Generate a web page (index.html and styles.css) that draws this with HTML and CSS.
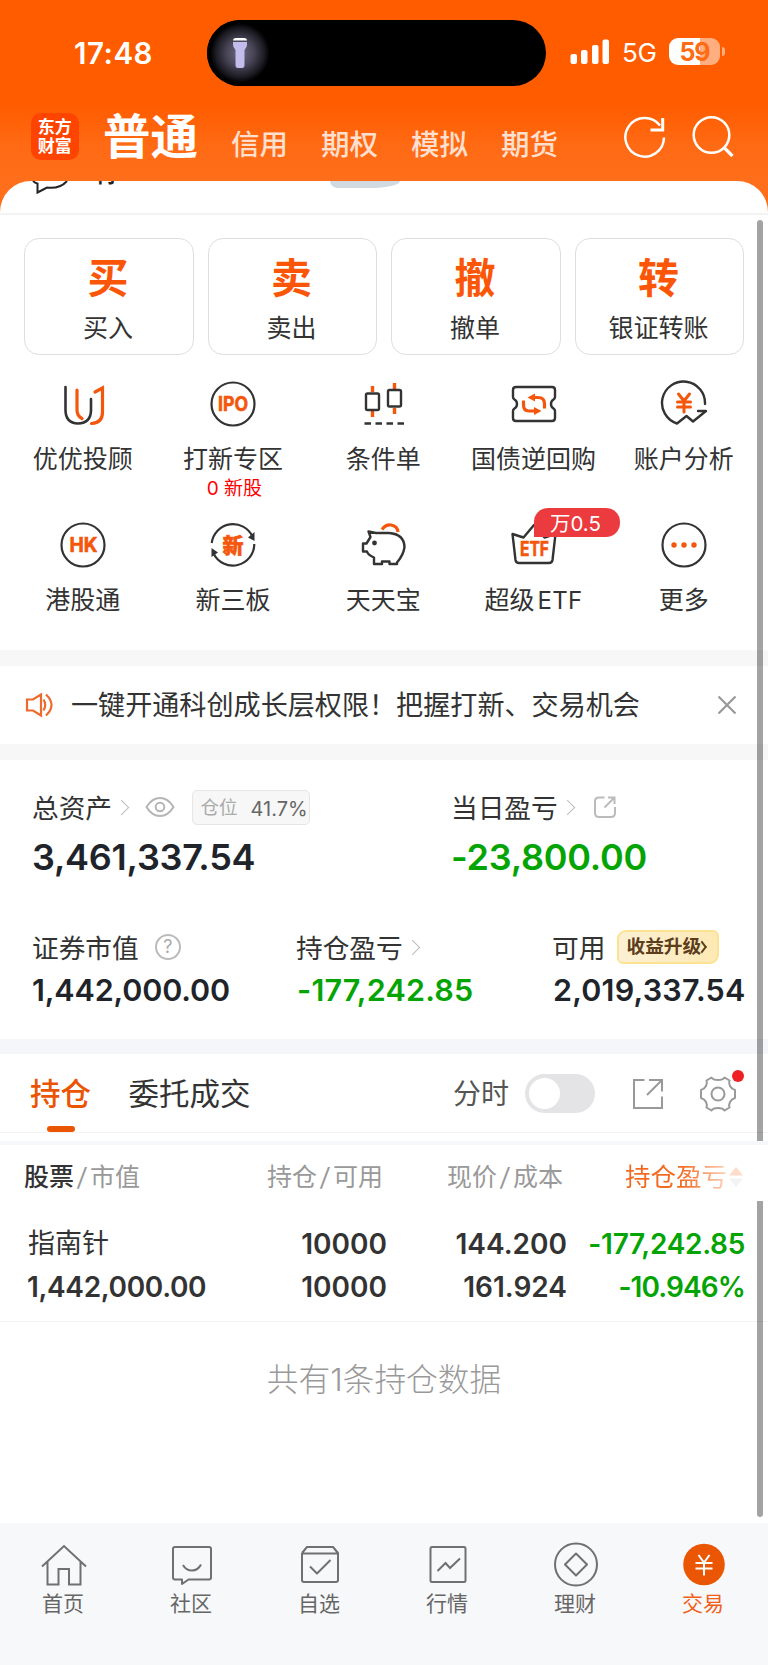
FILE: index.html
```html
<!DOCTYPE html>
<html lang="zh-CN">

<head>
    <meta charset="UTF-8">
    <meta name="viewport" content="width=device-width, initial-scale=1.0">
    <title>交易</title>
    <link rel="stylesheet" href="styles.css">
</head>

<body>
    <div class="app">
        <header class="header">
            <div class="status-bar">
                <span class="time">17:48</span>
                <div class="island">
                    <div class="torch">
                        <svg width="16" height="32" viewBox="0 0 16 32">
                            <path d="M1 3.500Q1 1 4 1H12Q15 1 15 3.500Z" fill="#fff" />
                            <path d="M1 5H15V8Q15 10 12.500 13V28Q12.500 31 10 31H6Q3.500 31 3.500 28V13Q1 10 1 8Z" fill="#c3bdee" />
                        </svg>
                    </div>
                </div>
                <svg class="signal" width="40" height="26" viewBox="0 0 40 26" fill="#fff">
                    <rect x="0.500" y="15" width="6.500" height="10" rx="2" />
                    <rect x="11" y="11" width="6.500" height="14" rx="2" />
                    <rect x="22" y="6" width="6.500" height="19" rx="2" />
                    <rect x="32.500" y="0.500" width="6.500" height="24.500" rx="2" />
                </svg>
                <span class="network">5G</span>
                <div class="battery">59</div>
                <i class="battery-nub"></i>
            </div>
            <nav class="account-nav">
                <div class="logo">东方<br>财富</div>
                <span class="account active">普通</span>
                <span class="account">信用</span>
                <span class="account">期权</span>
                <span class="account">模拟</span>
                <span class="account">期货</span>
                <svg class="refresh" width="46" height="46" viewBox="0 0 46 46" fill="none" stroke="#fff" stroke-width="2.500">
                    <path d="M42 23.500A19.300 19.300 0 1 1 38 11.500" />
                    <path d="M40.700 4V16H28.500" stroke-width="3" />
                </svg>
                <svg class="search" width="46" height="46" viewBox="0 0 46 46" fill="none" stroke="#fff" stroke-width="2.500">
                    <circle cx="20.500" cy="21" r="17.800" />
                    <path d="M33 33.500L41.500 42" stroke-width="3.200" />
                </svg>
            </nav>
        </header>

        <div class="sheet-top">
            <svg width="38" height="14" viewBox="0 0 38 14" fill="none" stroke="#222" stroke-width="2">
                <path d="M1 0Q3 2 5.500 2.500V11.500L15 6.500Q28 8 35 0" />
            </svg>
            <span class="peek-text">你</span>
            <i class="peek-pill"></i>
        </div>

        <section class="trade-cards">
            <div class="trade-card"><b>买</b><span>买入</span></div>
            <div class="trade-card"><b>卖</b><span>卖出</span></div>
            <div class="trade-card"><b>撤</b><span>撤单</span></div>
            <div class="trade-card"><b>转</b><span>银证转账</span></div>
        </section>

        <section class="menu">
            <div class="menu-item">
                <svg width="48" height="48" viewBox="0 0 48 48" fill="none" stroke="#333" stroke-width="2.600" stroke-linecap="round">
                    <path d="M6.500 7V30Q6.500 43 19 43.500Q32 43 32 30V19" />
                    <path d="M18 10V30Q18 36 23 38.500M36 12L43.500 8V32Q43.500 43 32.500 43.500" stroke="#f4560c" stroke-width="3.200" />
                </svg>
                <span>优优投顾</span>
            </div>
            <div class="menu-item">
                <svg width="48" height="48" viewBox="0 0 48 48" fill="none" stroke="#333" stroke-width="2.200">
                    <circle cx="24" cy="24" r="21.500" />
                    <text class="icon-text ipo" x="24" y="31" text-anchor="middle" textLength="30" lengthAdjust="spacingAndGlyphs">IPO</text>
                </svg>
                <span>打新专区</span>
                <em>0 新股</em>
            </div>
            <div class="menu-item">
                <svg width="48" height="48" viewBox="0 0 48 48" fill="none" stroke="#333" stroke-width="2.400">
                    <path d="M12.500 6V12M12.500 31V37M34.500 3V9M34.500 28V34" stroke="#f4560c" stroke-width="3.400" />
                    <rect x="6" y="13.500" width="13" height="16.500" rx="1.500" />
                    <rect x="28" y="10" width="13" height="16.500" rx="1.500" />
                    <path d="M4.500 43.500H44" stroke-dasharray="6.500 4.500" stroke-width="2.600" />
                </svg>
                <span>条件单</span>
            </div>
            <div class="menu-item">
                <svg width="48" height="48" viewBox="0 0 48 48" fill="none" stroke="#333" stroke-width="2.400" stroke-linejoin="round">
                    <path d="M6 7H42Q45 7 45 10V17Q45 18.500 43.500 19.500Q41 21 41 24Q41 27 43.500 28.500Q45 29.500 45 31V38Q45 41 42 41H6Q3 41 3 38V31Q3 29.500 4.500 28.500Q7 27 7 24Q7 21 4.500 19.500Q3 18.500 3 17V10Q3 7 6 7Z" />
                    <path d="M13.500 20.500V25Q13.500 31 19 31H27M22 17.500H28Q34.500 17.500 34.500 23.500V28.500" stroke="#f4560c" stroke-width="3.200" />
                    <path d="M25 13.500V21.500L17.500 17.500ZM24 27V35L31.500 31Z" fill="#f4560c" stroke="none" />
                </svg>
                <span>国债逆回购</span>
            </div>
            <div class="menu-item">
                <svg width="48" height="48" viewBox="0 0 48 48" fill="none" stroke="#333" stroke-width="2.400" stroke-linejoin="round" stroke-linecap="round">
                    <path d="M45 24A21.500 21.500 0 1 0 17 43.500L26.500 36L33 41.500L46 31H38" />
                    <path d="M18.500 14L24 21L29.500 14M24 21V32M17.500 22H30.500M17.500 27H30.500" stroke="#f4560c" stroke-width="3" />
                </svg>
                <span>账户分析</span>
            </div>
            <div class="menu-item">
                <svg width="48" height="48" viewBox="0 0 48 48" fill="none" stroke="#333" stroke-width="2.200">
                    <circle cx="24" cy="24" r="21.500" />
                    <text class="icon-text hk" x="24.500" y="31" text-anchor="middle" textLength="28" lengthAdjust="spacingAndGlyphs">HK</text>
                </svg>
                <span>港股通</span>
            </div>
            <div class="menu-item">
                <svg width="48" height="48" viewBox="0 0 48 48" fill="none" stroke="#333" stroke-width="2.200">
                    <path d="M2.700 22A21.500 21.500 0 0 1 43.500 15.500M45.300 23A21.500 21.500 0 0 1 4.500 32.500" />
                    <path d="M45.500 11V20L39 16.500ZM2.500 36V27L9 31.500Z" fill="#333" stroke="none" />
                    <text class="icon-text xin" x="24" y="31.500" text-anchor="middle">新</text>
                </svg>
                <span>新三板</span>
            </div>
            <div class="menu-item">
                <svg width="48" height="48" viewBox="0 0 48 48" fill="none" stroke="#333" stroke-width="2.400" stroke-linejoin="round">
                    <path d="M8.500 10.500L16 12H29Q44 13 44.500 26Q43.500 34 37 41.500V43H29.500V40.500H22V43H14V36.500Q8 34 7 30.500H3V22.500H6.500L10.500 16Z" />
                    <circle cx="14.500" cy="22" r="2.400" fill="#333" stroke="none" />
                    <path d="M22 8.500Q25.500 3.500 31 4Q37.500 5 38 11" stroke="#f4560c" stroke-width="3.200" />
                </svg>
                <span>天天宝</span>
            </div>
            <div class="menu-item">
                <svg width="48" height="48" viewBox="0 0 48 48" fill="none" stroke="#333" stroke-width="2.400" stroke-linejoin="round">
                    <path d="M2.500 13L13.500 16.500L24 4L34.500 16.500L45.500 13L42.500 39Q42 42 39 42H9Q6 42 5.500 39Z" />
                    <text class="icon-text etf" x="24.500" y="35" text-anchor="middle" textLength="29" lengthAdjust="spacingAndGlyphs">ETF</text>
                </svg>
                <span>超级<b>ETF</b></span>
                <div class="rate-badge">万0.5</div>
            </div>
            <div class="menu-item">
                <svg width="48" height="48" viewBox="0 0 48 48" fill="none" stroke="#333" stroke-width="2.200">
                    <circle cx="24" cy="24" r="21.500" />
                    <g fill="#f4560c" stroke="none">
                        <circle cx="14" cy="24" r="2.700" />
                        <circle cx="24" cy="24" r="2.700" />
                        <circle cx="34" cy="24" r="2.700" />
                    </g>
                </svg>
                <span>更多</span>
            </div>
        </section>

        <section class="notice">
            <svg width="28" height="26" viewBox="0 0 28 26" fill="none" stroke="#ee6a2c" stroke-width="2.200">
                <path d="M2 7.500H8L16 2.500V23.500L8 18.500H2Z" />
                <path d="M18.500 7.500Q22 13 18.500 18.500M21 2.500Q32 13 21 23.500" />
            </svg>
            <p>一键开通科创成长层权限！把握打新、交易机会</p>
            <svg width="18" height="18" viewBox="0 0 18 18" fill="none" stroke="#999" stroke-width="2.200">
                <path d="M0.500 0.500L17.500 17.500M17.500 0.500L0.500 17.500" />
            </svg>
        </section>

        <section class="assets">
            <div class="asset total">
                <div class="label">
                    <span>总资产</span>
                    <i class="chevron"></i>
                    <svg class="eye" width="30" height="22" viewBox="0 0 30 22" fill="none" stroke="#b5b5b5" stroke-width="2">
                        <path d="M1.500 11Q7 2 15 2T28.500 11Q23 20 15 20T1.500 11Z" />
                        <circle cx="15" cy="11" r="4.300" />
                    </svg>
                    <div class="position-tag"><span>仓位</span><b>41.7%</b></div>
                </div>
                <div class="value big">3,461,337.54</div>
            </div>
            <div class="asset today">
                <div class="label">
                    <span>当日盈亏</span>
                    <i class="chevron"></i>
                    <svg class="share" width="22" height="22" viewBox="0 0 22 22" fill="none" stroke="#bbb" stroke-width="2">
                        <path d="M10.500 1.500H5Q1 1.500 1 5V17Q1 21 5 21H17Q21 21 21 17V11" />
                        <path d="M10.500 11.500L20.500 1.500M14 1.500H20.500V8" />
                    </svg>
                </div>
                <div class="value big down">-23,800.00</div>
            </div>
            <div class="asset market">
                <div class="label">
                    <span>证券市值</span>
                    <div class="help">?</div>
                </div>
                <div class="value">1,442,000.00</div>
            </div>
            <div class="asset profit">
                <div class="label">
                    <span>持仓盈亏</span>
                    <i class="chevron"></i>
                </div>
                <div class="value down">-177,242.85</div>
            </div>
            <div class="asset usable">
                <div class="label">
                    <span>可用</span>
                    <div class="upgrade">收益升级<i></i></div>
                </div>
                <div class="value">2,019,337.54</div>
            </div>
        </section>

        <section class="tabs">
            <span class="tab active">持仓</span>
            <span class="tab">委托成交</span>
            <span class="time-label">分时</span>
            <div class="switch"></div>
            <svg class="export" width="32" height="32" viewBox="0 0 32 32" fill="none" stroke="#999" stroke-width="2">
                <path d="M12.500 2H2V30H30V18.500M17 2H30V13.500" />
                <path d="M15 17L29.500 2.500" />
            </svg>
            <div class="settings">
                <svg width="38" height="38" viewBox="0 0 38 38" fill="none" stroke="#999" stroke-width="2" stroke-linejoin="round">
                    <path d="M12.500 2.500Q14 5 19 5T25.500 2.500L30.500 5.500Q29.500 8 31 11T36 15V23Q32.500 24 31 27T30.500 32.500L25.500 35.500Q24 33 19 33T12.500 35.500L7.500 32.500Q8.500 30 7 27T2 23V15Q5.500 14 7 11T7.500 5.500Z" />
                    <circle cx="19" cy="19" r="6.500" />
                </svg>
                <i class="dot"></i>
            </div>
        </section>

        <section class="table-head">
            <span class="c1"><b>股票</b><s>/</s>市值</span>
            <span class="c2">持仓<s>/</s>可用</span>
            <span class="c3">现价<s>/</s>成本</span>
            <span class="c4">持仓盈亏</span>
            <svg width="16" height="22" viewBox="0 0 16 22">
                <path d="M1 9.500L8 1L15 9.500Z" fill="#fddcca" />
                <path d="M1 12.500L8 21L15 12.500Z" fill="#f3f3f3" />
            </svg>
        </section>
        <section class="stock-row">
            <span class="name">指南针</span>
            <span>10000</span>
            <span>144.200</span>
            <span class="down">-177,242.85</span>
            <span class="amount">1,442,000.00</span>
            <span>10000</span>
            <span>161.924</span>
            <span class="down rate">-10.946%</span>
        </section>
        <p class="summary">共有1条持仓数据</p>

        <footer class="tabbar">
            <div class="tabbar-item">
                <svg width="46" height="46" viewBox="0 0 46 46" fill="none" stroke="#707070" stroke-width="2">
                    <path d="M1 24.500L23 4L45 24.500M6.500 20V42.500H17.500V27H28V42.500H39.500V20" />
                </svg>
                <span>首页</span>
            </div>
            <div class="tabbar-item">
                <svg width="46" height="46" viewBox="0 0 46 46" fill="none" stroke="#707070" stroke-width="2" stroke-linejoin="round">
                    <path d="M6 5H40Q42 5 42 7V35.500Q42 37.500 40 37.500H19.500L13 42V37.500H6Q4 37.500 4 35.500V7Q4 5 6 5Z" />
                    <path d="M14 23Q17 28.500 23 28.500T32 22.500" />
                </svg>
                <span>社区</span>
            </div>
            <div class="tabbar-item">
                <svg width="46" height="46" viewBox="0 0 46 46" fill="none" stroke="#707070" stroke-width="2" stroke-linejoin="round">
                    <path d="M5 11L10 5H36L41 11V38Q41 40 39 40H7Q5 40 5 38V11M5 11.500H41" />
                    <path d="M13 24.500L20 31.500L33.500 18" />
                </svg>
                <span>自选</span>
            </div>
            <div class="tabbar-item">
                <svg width="46" height="46" viewBox="0 0 46 46" fill="none" stroke="#707070" stroke-width="2">
                    <rect x="5.500" y="5" width="35" height="35" rx="1.500" />
                    <path d="M12.500 29L20.500 21L25 26L35 16.500" />
                </svg>
                <span>行情</span>
            </div>
            <div class="tabbar-item">
                <svg width="46" height="46" viewBox="0 0 46 46" fill="none" stroke="#707070" stroke-width="2" stroke-linejoin="round">
                    <circle cx="23" cy="22.500" r="21" />
                    <path d="M23 11.500L34 22.500L23 33.500L12 22.500Z" />
                </svg>
                <span>理财</span>
            </div>
            <div class="tabbar-item active">
                <svg width="46" height="46" viewBox="0 0 46 46" fill="none" stroke="#fff" stroke-width="2">
                    <circle cx="23" cy="22.500" r="20.800" fill="#eb5604" stroke="none" />
                    <path d="M17.500 13L23 20.500L28.500 13M23 20.500V33.500M14.500 21H31.500M14.500 26.500H31.500" />
                </svg>
                <span>交易</span>
            </div>
        </footer>

        <i class="scrollbar upper"></i>
        <i class="scrollbar lower"></i>
    </div>
</body>

</html>
```

FILE: styles.css
```css
* {
    box-sizing: border-box;
}

body {
    margin: 0;
    background: #fff;
    color: #333;
    font-family: Inter, "Noto Sans CJK SC", sans-serif;
    font-size: 25px;
    line-height: 36px;
}

i, em, s {
    font-style: normal;
    text-decoration: none;
}

p {
    margin: 0;
}

svg {
    display: block;
    flex-shrink: 0;
}

span {
    white-space: nowrap;
}

.app {
    position: relative;
    width: 768px;
    height: 1665px;
    overflow: hidden;
}

/* header */
.header {
    height: 212px;
    background: linear-gradient(to bottom, #ff5c00 106px, #ff6a14 145px, #ff6e1a 181px);
}

.status-bar {
    display: flex;
    align-items: center;
    height: 106px;
    padding-left: 74px;
    color: #fff;
}

.time {
    width: 132.5px;
    font-size: 29.5px;
    font-weight: 600;
    letter-spacing: 0.5px;
}

.island {
    width: 339px;
    height: 66px;
    border-radius: 33px;
    background: #000;
}

.torch {
    display: flex;
    align-items: center;
    justify-content: center;
    width: 66px;
    height: 66px;
    border-radius: 50%;
    background: radial-gradient(circle closest-side, #6d6880 0%, #4a4658 40%, #1a1920 75%, #000 90%);
}

.signal {
    margin: -3px 0 0 24px;
}

.network {
    width: 47px;
    margin-left: 12.5px;
    font-size: 26px;
    letter-spacing: -0.3px;
}

.battery {
    width: 51px;
    height: 27px;
    margin-top: -3px;
    border-radius: 9px;
    background: linear-gradient(to right, #fff 60%, #ffae80 60%);
    color: #ff6a14;
    font-size: 25px;
    font-weight: 700;
    line-height: 28px;
    letter-spacing: -1px;
    text-align: center;
}

.battery-nub {
    width: 3px;
    height: 9px;
    margin: -3px 0 0 2px;
    border-radius: 0 4px 4px 0;
    background: #ffae80;
}

.account-nav {
    display: flex;
    height: 75px;
    padding-left: 31px;
}

.logo {
    width: 47.5px;
    height: 47px;
    margin: 7px 24.5px 0 0;
    padding-top: 5px;
    border-radius: 10px;
    background: #ff4400;
    color: #fff;
    font-size: 17px;
    font-weight: 700;
    line-height: 19px;
    text-align: center;
}

.account {
    width: 90px;
    padding-top: 21px;
    color: #ffdfcd;
    font-size: 28.5px;
    font-weight: 500;
}

.account.active {
    width: 128px;
    padding-top: 13px;
    color: #fff;
    font-size: 47.5px;
    font-weight: 600;
}

.refresh {
    margin: 8px 0 0 31px;
}

.search {
    margin: 8px 0 0 23px;
}

/* top of the scrolled page, cut by the header */
.sheet-top {
    display: flex;
    height: 34px;
    margin-top: -31px;
    padding-left: 32px;
    border-bottom: 2px solid #f3f3f3;
    border-radius: 31px 31px 0 0;
    background: #fff;
    overflow: hidden;
}

.peek-text {
    width: 210px;
    height: 28px;
    margin: -22px 0 0 25px;
    color: #222;
    font-size: 27px;
    font-weight: 500;
    line-height: 28px;
}

.peek-pill {
    width: 70px;
    height: 7px;
    margin-left: 25px;
    border-radius: 0 0 30px 8px / 0 0 7px 7px;
    background: #d0dae0;
}

.trade-cards {
    display: grid;
    grid-template-columns: repeat(4, 1fr);
    gap: 14px;
    padding: 23px 24px 0;
}

.trade-card {
    display: flex;
    flex-direction: column;
    align-items: center;
    height: 117px;
    padding: 21px 1.5px 0 0;
    border: 1.5px solid #dedede;
    border-radius: 15px;
}

.trade-card b {
    color: #fb5607;
    font-size: 41px;
    font-weight: 700;
}

.trade-card span {
    margin-top: 13.5px;
}

.menu {
    display: grid;
    grid-template-columns: repeat(5, 150.3px);
    grid-template-rows: 141px 154px;
    height: 295px;
    padding: 0 8px;
}

.menu-item {
    position: relative;
    display: flex;
    flex-direction: column;
    align-items: center;
    padding-top: 25px;
}

.menu-item span {
    margin: 12.5px 1px 0 0;
}

.menu-item span b {
    margin-left: 3px;
    font-weight: 400;
    font-size: 24px;
    letter-spacing: 0.4px;
}

.menu-item em {
    margin: -3.5px 0 0 2px;
    color: #ff0000;
    font-size: 19px;
    line-height: 32px;
}

.icon-text {
    fill: #f4560c;
    stroke: #f4560c;
    stroke-width: 0.6px;
    font-weight: 700;
}

.ipo,
.hk {
    font-size: 20px;
}

.xin {
    font-size: 21px;
    font-weight: 900;
}

.etf {
    font-size: 20px;
}

.rate-badge {
    position: absolute;
    top: 12px;
    left: 75.5px;
    width: 86px;
    height: 28.5px;
    padding-right: 4px;
    border-radius: 14px 14px 14px 0;
    background: #ec3b3e;
    color: #fff;
    font-size: 20.5px;
    line-height: 31px;
    text-align: center;
}

.notice {
    display: flex;
    align-items: center;
    height: 110px;
    padding: 0 32.5px 0 25px;
    border-top: 16px solid #f7f7f7;
    border-bottom: 16px solid #f7f7f7;
}

.notice p {
    flex: 1;
    margin: 2px 0 0 18px;
    font-size: 27.1px;
    white-space: nowrap;
}

/* assets */
.assets {
    display: grid;
    grid-template-columns: 264px 156px 101px 1fr;
    grid-template-rows: 140px 139px;
    padding-left: 32px;
    border-bottom: 15px solid #f5f6fa;
    height: 294px;
}

.total {
    grid-column: 1 / 3;
}

.today {
    grid-column: 3 / 5;
    margin-left: -1px;
}

.profit {
    grid-column: 2 / 4;
}

.usable {
    margin-left: -1px;
}

.label {
    display: flex;
    align-items: center;
    height: 36px;
    margin-top: 29px;
    font-size: 26.7px;
}

.label > span {
    margin-top: 2px;
}

.chevron {
    width: 11px;
    height: 11px;
    margin-left: 4px;
    border: solid #bbb;
    border-width: 1.8px 1.8px 0 0;
    transform: rotate(45deg);
}

.eye {
    margin-left: 18px;
}

.position-tag {
    display: flex;
    align-items: center;
    width: 118px;
    height: 35px;
    margin-left: 16.5px;
    padding-left: 8px;
    border: 1.5px solid #e6e6e6;
    border-radius: 5px;
    background: #f7f7f7;
    color: #aaa;
    font-size: 18.5px;
}

.position-tag b {
    margin: 4px 0 0 13px;
    color: #666;
    font-size: 20px;
    font-weight: 400;
}

.share {
    margin-left: 21px;
}

.help {
    width: 26px;
    height: 26px;
    margin-left: 16px;
    border: 2px solid #bbb;
    border-radius: 50%;
    color: #aaa;
    font-size: 18px;
    line-height: 22px;
    text-align: center;
}

.upgrade {
    display: flex;
    align-items: center;
    justify-content: center;
    width: 102px;
    height: 34px;
    margin-left: 12px;
    padding-right: 4px;
    border: 2px solid #fce391;
    border-radius: 9px 6px 9px 6px;
    background: linear-gradient(to right, #fcf0d4, #fde9b4);
    color: #5c3d1c;
    font-size: 18.7px;
    font-weight: 700;
}

.upgrade i {
    width: 8px;
    height: 8px;
    margin-left: -3px;
    border: solid #5c3d1c;
    border-width: 2px 2px 0 0;
    transform: rotate(45deg) skew(8deg, 8deg);
}

.value {
    margin-top: 7px;
    color: #20242a;
    font-size: 30.5px;
    font-weight: 600;
}

.value.big {
    margin-top: 14px;
    font-size: 36px;
    letter-spacing: -0.25px;
}

.market .value {
    letter-spacing: -0.15px;
}

.profit .value {
    padding-left: 1px;
    letter-spacing: 0.2px;
}

.usable .value {
    padding-left: 1px;
    letter-spacing: 0.2px;
}

.value.down,
.down {
    color: #04a404;
}

/* positions */
.tabs {
    display: flex;
    align-items: center;
    height: 79px;
    padding: 1px 0 0 30px;
    border-bottom: 1px solid #f3f3f5;
}

.tab {
    position: relative;
    width: 98.5px;
    margin-top: 1px;
    font-size: 30.5px;
}

.tab.active {
    color: #ea5504;
    font-weight: 500;
}

.tab.active::after {
    content: "";
    position: absolute;
    left: 17px;
    bottom: -20px;
    width: 28px;
    height: 6px;
    border-radius: 3px;
    background: #ea5504;
}

.time-label {
    margin: 1px 0 0 226px;
    color: #555;
    font-size: 28px;
}

.switch {
    width: 70px;
    height: 39px;
    margin-left: 16px;
    padding: 4px;
    border-radius: 20px;
    background: #e4e4e6;
}

.switch::before {
    content: "";
    display: block;
    width: 31px;
    height: 31px;
    border-radius: 50%;
    background: #fff;
}

.export {
    margin-left: 37px;
}

.settings {
    position: relative;
    margin-left: 35px;
}

.dot {
    position: absolute;
    top: -5px;
    right: -6.5px;
    width: 12px;
    height: 12px;
    border-radius: 50%;
    background: #ee2222;
}

.table-head {
    display: flex;
    align-items: center;
    height: 68px;
    margin-top: 8px;
    padding-left: 24px;
    border-top: 4px solid #f7f8fb;
    color: #999;
}

.table-head b {
    color: #333;
    font-weight: 500;
}

.table-head s {
    display: inline-block;
    width: 16px;
    text-align: center;
    transform: skewX(-6deg);
}

.c1 {
    width: 243px;
}

.c2 {
    width: 180px;
}

.c3 {
    width: 178px;
}

.c4 {
    width: 103px;
    font-size: 25.5px;
    background: linear-gradient(to right, #f26a22 55%, #fcd5c0 100%);
    background-clip: text;
    color: transparent;
}

.stock-row {
    display: grid;
    grid-template-columns: 200px 159px 180px 178px;
    grid-template-rows: 43px 43px;
    align-items: center;
    height: 113px;
    padding: 13px 0 0 28px;
    border-bottom: 1px solid #f3f3f5;
    font-size: 28px;
    font-weight: 600;
    text-align: right;
}

.stock-row .down {
    letter-spacing: -0.3px;
}

.stock-row .rate {
    letter-spacing: -0.9px;
}

.stock-row .name,
.stock-row .amount {
    text-align: left;
}

.stock-row .name {
    font-size: 27px;
    font-weight: 400;
}

.stock-row .amount {
    margin-left: -1px;
    letter-spacing: -0.35px;
}

.summary {
    height: 201px;
    padding-top: 40px;
    color: #999;
    font-size: 31.7px;
    font-weight: 300;
    text-align: center;
}

.tabbar {
    display: flex;
    height: 143px;
    padding-top: 19px;
    background: #f7f8fa;
}

.tabbar-item {
    display: flex;
    flex-direction: column;
    align-items: center;
    width: 128px;
    color: #666;
    font-size: 21px;
}

.tabbar-item span {
    margin: -2px 2px 0 0;
}

.tabbar-item.active {
    color: #f06018;
}

.scrollbar {
    position: absolute;
    right: 5px;
    width: 6px;
    background: rgba(0, 0, 0, 0.36);
}

.upper {
    top: 220px;
    height: 921px;
    border-radius: 3px 3px 0 0;
}

.lower {
    top: 1201px;
    height: 316px;
    border-radius: 0 0 3px 3px;
}
```
